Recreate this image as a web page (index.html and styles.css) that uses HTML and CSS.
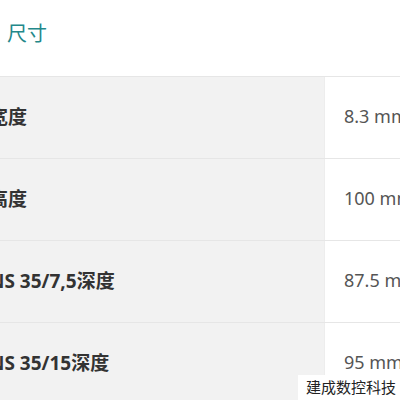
FILE: index.html
```html
<!DOCTYPE html>
<html lang="zh">
<head>
<meta charset="utf-8">
<link rel="stylesheet" href="styles.css">
</head>
<body>
<div class="section">
  <h2 class="title">尺寸</h2>
  <div class="spec-table">
    <div class="row"><div class="label">宽度</div><div class="value">8.3 mm</div></div>
    <div class="row"><div class="label">高度</div><div class="value">100 mm</div></div>
    <div class="row"><div class="label">NS 35/7,5深度</div><div class="value">87.5 mm</div></div>
    <div class="row"><div class="label">NS 35/15深度</div><div class="value">95 mm</div></div>
  </div>
</div>
<div class="watermark">建成数控科技</div>
</body>
</html>
```
FILE: styles.css
```css
html, body {
  margin: 0;
  padding: 0;
  background: #fff;
  overflow: hidden;
  width: 400px;
  height: 400px;
}
body {
  font-family: "Noto Sans", "Noto Sans CJK SC", sans-serif;
  position: relative;
}
.section {
  width: 560px;
}
.title {
  margin: 0;
  padding: 20px 0 0 7px;
  height: 76px;
  box-sizing: border-box;
  font-size: 20px;
  line-height: 28px;
  font-weight: 400;
  color: #23888a;
}
.spec-table {
  margin-left: -20px;
  border-top: 1px solid #e6e6e6;
}
.row {
  display: grid;
  grid-template-columns: 344px 1fr;
  height: 82px;
  border-bottom: 1px solid #e6e6e6;
  box-sizing: border-box;
}
.label {
  background: #f2f2f2;
  display: flex;
  align-items: center;
  padding: 0 0 4px 9px;
  font-size: 19px;
  font-weight: 700;
  color: #333;
}
.value {
  display: flex;
  align-items: center;
  padding: 0 0 4px 19px;
  font-size: 18px;
  color: #555;
  border-left: 1px solid #ededed;
}
.watermark {
  position: absolute;
  right: 0;
  bottom: 0;
  padding: 2px 4px 3px 8px;
  background: #fff;
  font-family: "Noto Sans CJK SC", sans-serif;
  font-size: 15px;
  line-height: 20px;
  color: #222;
}
```
